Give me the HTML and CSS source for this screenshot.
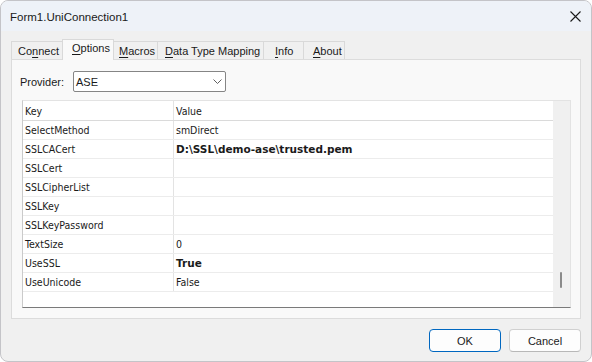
FILE: index.html
```html
<!DOCTYPE html>
<html lang="en">
<head>
  <meta charset="UTF-8"/>
  <title>Form1.UniConnection1</title>
  <link rel="stylesheet" href="styles.css">
</head>
<body>
  <div class="window">
    <div class="titlebar">
      <span class="title">Form1.UniConnection1</span>
      <svg class="close" width="11" height="11" viewBox="0 0 11 11">
        <path d="M0.5 0.5 L10.5 10.5 M10.5 0.5 L0.5 10.5" stroke="#1a1a1a" stroke-width="1.1" fill="none"/>
      </svg>
    </div>
    <div class="content">
      <div class="tabs">
        <div class="tab t-connect">Co<u>n</u>nect</div>
        <div class="tab t-options active"><u>O</u>ptions</div>
        <div class="tab t-macros"><u>M</u>acros</div>
        <div class="tab t-mapping"><u>D</u>ata Type Mapping</div>
        <div class="tab t-info"><u>I</u>nfo</div>
        <div class="tab t-about"><u>A</u>bout</div>
      </div>
      <div class="page">
        <div class="provider">
          <label>Provider:</label>
          <div class="combo">
            <span>ASE</span>
            <svg width="9" height="5" viewBox="0 0 9 5"><path d="M0.5 0.5 L4.5 4.5 L8.5 0.5" stroke="#606060" fill="none"/></svg>
          </div>
        </div>
        <div class="grid">
          <div class="rows">
            <table>
              <tr class="head"><td>Key</td><td>Value</td></tr>
              <tr><td>SelectMethod</td><td>smDirect</td></tr>
              <tr><td>SSLCACert</td><td class="b">D:\SSL\demo-ase\trusted.pem</td></tr>
              <tr><td>SSLCert</td><td></td></tr>
              <tr><td>SSLCipherList</td><td></td></tr>
              <tr><td>SSLKey</td><td></td></tr>
              <tr><td>SSLKeyPassword</td><td></td></tr>
              <tr><td>TextSize</td><td>0</td></tr>
              <tr><td>UseSSL</td><td class="b">True</td></tr>
              <tr><td>UseUnicode</td><td>False</td></tr>
            </table>
          </div>
          <div class="scrollbar"><div class="thumb"></div></div>
        </div>
      </div>
      <div class="buttons">
        <button class="default">OK</button>
        <button>Cancel</button>
      </div>
    </div>
  </div>
</body>
</html>
```

FILE: styles.css
```css
body { margin: 0; background: #ffffff; font-family: "Liberation Sans", Arial, sans-serif; font-size: 11px; color: #1a1a1a; }
.window { width: 592px; height: 362px; box-sizing: border-box; border: 1px solid #c4c4c8; border-radius: 8px; background: #f0f0f0; overflow: hidden; display: flex; flex-direction: column; }
.titlebar { flex-shrink: 0; height: 30px; background: #eef2f8; display: flex; align-items: center; justify-content: space-between; padding: 0 9px 0 9px; }
.title { font-size: 11.5px; padding-top: 1px; }
.close { margin-right: 1px; }
.content { padding: 8px 10px 0 10px; display: flex; flex-direction: column; }

/* tab strip */
.tabs { display: flex; height: 20px; align-items: flex-end; position: relative; z-index: 1; }
.tab { box-sizing: border-box; height: 18px; border: 1px solid #d9d9d9; border-bottom: none; margin-right: -1px; background: #f0f0f0; line-height: 18px; white-space: nowrap; }
.tab u { text-decoration-thickness: 1px; text-underline-offset: 2px; }
.tab.active { height: 21px; background: #f9f9f9; line-height: 17px; margin-bottom: -1px; }
.t-connect { width: 52px; padding-left: 6px; }
.t-options { width: 52px; padding-left: 9px; }
.t-macros { width: 45px; padding-left: 5px; }
.t-mapping { width: 107px; padding-left: 7px; }
.t-info { width: 41px; padding-left: 11px; }
.t-about { width: 42px; padding-left: 9px; }

/* options page */
.page { box-sizing: border-box; height: 260px; border: 1px solid #dcdcdc; background: #f9f9f9; padding: 11px 9px 10px 10px; display: flex; flex-direction: column; }
.provider { display: flex; align-items: center; }
.provider label { width: 53px; margin-left: -2px; }
.combo { box-sizing: border-box; width: 153px; height: 21px; border: 1px solid #858585; border-radius: 2px; background: #ffffff; display: flex; align-items: center; justify-content: space-between; padding: 0 3px 0 2px; }
.grid { box-sizing: border-box; margin-top: 8px; height: 208px; border: 1px solid #e3e3e3; border-left-color: #cacaca; border-bottom-color: #7a7a7a; background: #ffffff; display: flex; }
.rows { flex: 1; }
table { width: 100%; border-collapse: collapse; table-layout: fixed; font-family: "DejaVu Sans Condensed", "DejaVu Sans", sans-serif; font-size: 10.5px; }
td { height: 18px; border-bottom: 1px solid #ececec; padding: 0 0 0 2px; white-space: nowrap; overflow: hidden; }
td:first-child { width: 148px; border-right: 1px solid #e3e3e3; }
tr.head td { height: 19px; border-bottom-color: #dadada; }
td.b { font-family: "DejaVu Sans", sans-serif; font-weight: bold; }
.scrollbar { width: 17px; background: #f0f0f0; position: relative; }
.thumb { position: absolute; left: 7px; top: 171px; width: 2px; height: 16px; background: #8a8a8a; border-radius: 1px; }

.buttons { display: flex; justify-content: flex-end; gap: 8px; margin-top: 10px; }
button { width: 72px; height: 23px; border: 1px solid #d0d0d0; border-bottom-color: #b8b8b8; border-radius: 4px; background: #fdfdfd; font-family: "Liberation Sans", Arial, sans-serif; font-size: 11px; color: #1a1a1a; padding: 0; }
button.default { border: 1px solid #0067c0; }
```
